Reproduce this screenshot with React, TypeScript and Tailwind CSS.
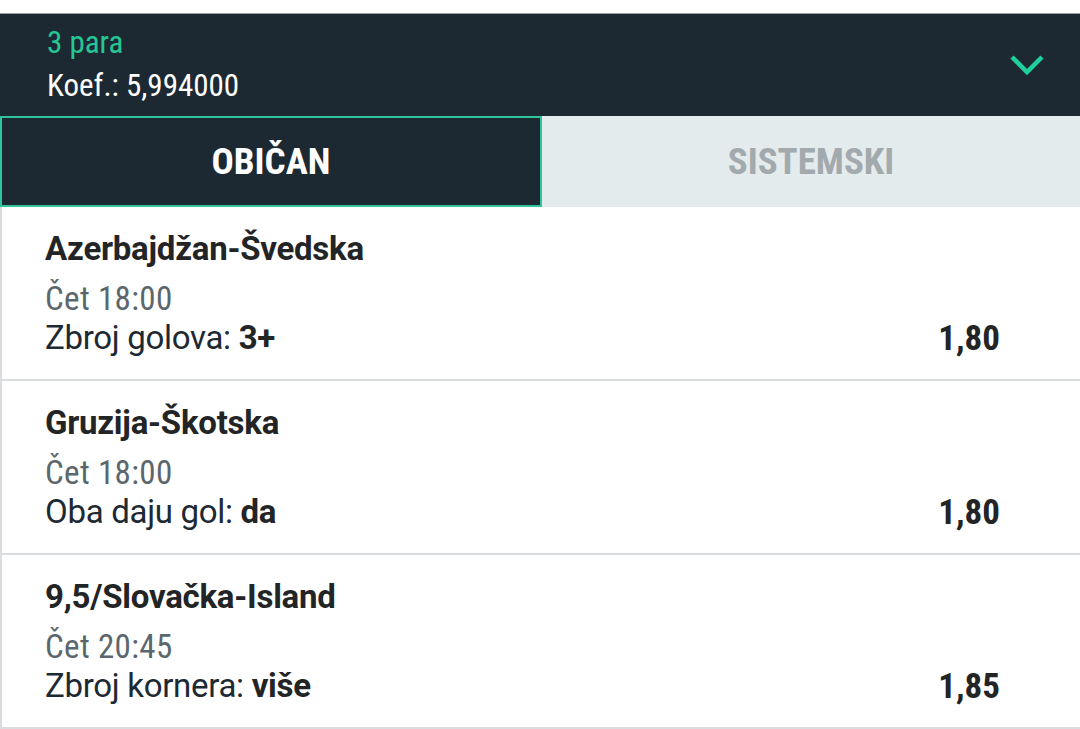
type Bet = {
  match: string;
  time: string;
  market: string;
  pick: string;
  odds: string;
};

const bets: Bet[] = [
  { match: "Azerbajdžan-Švedska", time: "Čet 18:00", market: "Zbroj golova:", pick: "3+", odds: "1,80" },
  { match: "Gruzija-Škotska", time: "Čet 18:00", market: "Oba daju gol:", pick: "da", odds: "1,80" },
  { match: "9,5/Slovačka-Island", time: "Čet 20:45", market: "Zbroj kornera:", pick: "više", odds: "1,85" },
];

function BetRow({ bet }: { bet: Bet }) {
  return (
    <div className="flex items-end justify-between border-b-2 border-[#d9dddf] pl-[43px] pr-[80px] pt-[22px] pb-[21px]">
      <div className="flex flex-col">
        <div className="text-[33px] leading-[40px] font-bold text-[#222426] [font-stretch:96%] tracking-[-0.25px]">
          {bet.match}
        </div>
        <div className="mt-[10px] text-[33px] leading-[40px] text-[#5b676c] [font-stretch:87.5%] tracking-[0.35px]">
          {bet.time}
        </div>
        <div className="-mt-[1px] text-[33px] leading-[40px] text-[#1d2933] [font-stretch:96%] tracking-[-0.3px]">
          {bet.market} <span className="font-bold text-[#222426]">{bet.pick}</span>
        </div>
      </div>
      <div className="-mb-[1px] text-[35px] leading-[40px] font-bold text-[#222426]">{bet.odds}</div>
    </div>
  );
}

export default function App() {
  return (
    <div className="w-[1080px] h-[729px] overflow-hidden bg-white flex flex-col font-['Roboto',sans-serif] [font-stretch:87.5%]">
      <div className="h-[14px] bg-white border-b border-[#9aa0a3] shrink-0" />

      {/* Header */}
      <div className="h-[102px] shrink-0 bg-[#1c2932] flex items-start justify-between pl-[47px] pr-[32px] pt-[7px]">
        <div className="flex flex-col">
          <span className="text-[31px] leading-[43px] text-[#25c795]">3 para</span>
          <span className="text-[31px] leading-[43px] text-white">Koef.: 5,994000</span>
        </div>
        <svg width="40" height="28" viewBox="0 0 40 28" className="mt-[30px]" fill="none">
          <polyline points="4,6 19,21 34,6" stroke="#1fcf9c" strokeWidth="4.5" />
        </svg>
      </div>

      {/* Tabs */}
      <div className="h-[91px] shrink-0 flex">
        <div className="flex-1 flex items-center justify-center bg-[#1c2932] border-2 border-[#2fc49b]">
          <span className="text-[37px] font-bold text-white">OBIČAN</span>
        </div>
        <div className="flex-1 flex items-center justify-center bg-[#e4ebed]">
          <span className="text-[37px] font-bold text-[#a3aaae]">SISTEMSKI</span>
        </div>
      </div>

      {/* Bets */}
      <div className="flex-1 border-l-2 border-[#d9dddf]">
        {bets.map((b) => (
          <BetRow key={b.match} bet={b} />
        ))}
      </div>
    </div>
  );
}
